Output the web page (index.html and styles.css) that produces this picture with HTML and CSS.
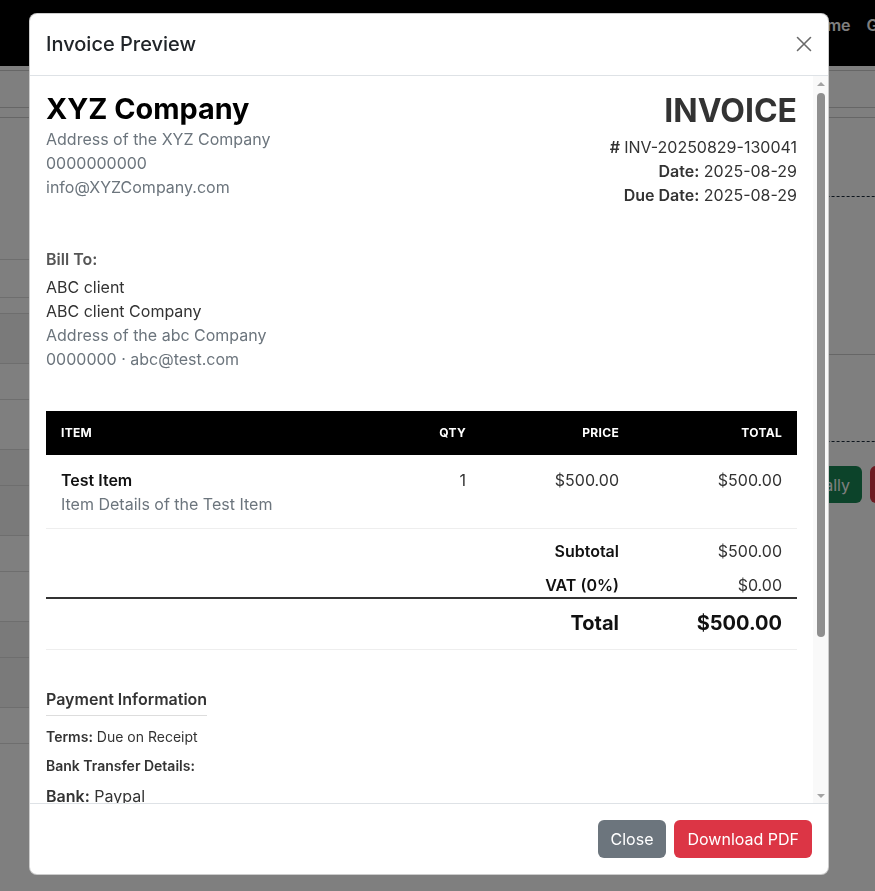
FILE: index.html
```html
<!DOCTYPE html>
<html lang="en">
<head>
<meta charset="utf-8">
<title>Invoice Preview</title>
<link rel="stylesheet" href="styles.css">
</head>
<body>
<div class="page">
  <nav class="topnav">
    <a class="nav-link">Invoices</a>
    <a class="nav-link">Home</a>
    <a class="nav-link">Guide</a>
  </nav>
  <div class="toolbar"></div>
  <div class="tabs"></div>
  <div class="content">
    <div class="bg-left">
      <div class="bg-spacer"></div>
      <div class="bg-h1"></div>
      <div class="bg-h2"></div>
      <div class="bg-main"></div><div class="bg-sub"></div>
      <div class="bg-main alt"></div><div class="bg-sub alt"></div>
      <div class="bg-main"></div><div class="bg-sub"></div>
      <div class="bg-main alt"></div><div class="bg-sub alt"></div>
      <div class="bg-main"></div><div class="bg-sub"></div>
      <div class="bg-last"></div>
    </div>
    <div class="bg-right">
      <div class="card-a"></div>
      <div class="card-b"></div>
      <div class="card-c"></div>
      <div class="card-actions">
        <span class="bg-btn green">Mark Paid Manually</span>
        <span class="bg-btn red">Delete</span>
      </div>
    </div>
  </div>
</div>
<div class="backdrop"></div>

<div class="modal">
  <header class="modal-header">
    <h5 class="modal-title">Invoice Preview</h5>
    <button class="btn-close" aria-label="Close">
      <svg width="16" height="16" viewBox="0 0 16 16"><path d="M1.5 1.5 L14.5 14.5 M14.5 1.5 L1.5 14.5" stroke="currentColor" stroke-width="1.6" fill="none" stroke-linecap="round"/></svg>
    </button>
  </header>
  <div class="modal-body">
    <div class="body-content">
      <div class="inv-head">
        <div class="from">
          <h1 class="company">XYZ Company</h1>
          <div class="muted">Address of the XYZ Company</div>
          <div class="muted">0000000000</div>
          <div class="muted">info@XYZCompany.com</div>
        </div>
        <div class="meta">
          <h2 class="inv-title">INVOICE</h2>
          <div><b># </b>INV-20250829-130041</div>
          <div><b>Date:</b> 2025-08-29</div>
          <div><b>Due Date:</b> 2025-08-29</div>
        </div>
      </div>

      <div class="bill">
        <div class="bill-label">Bill To:</div>
        <div>ABC client</div>
        <div>ABC client Company</div>
        <div class="muted">Address of the abc Company</div>
        <div class="muted">0000000 · abc@test.com</div>
      </div>

      <table class="items">
        <colgroup>
          <col>
          <col class="c-qty">
          <col class="c-price">
          <col class="c-total">
        </colgroup>
        <thead>
          <tr>
            <th class="left">Item</th>
            <th>Qty</th>
            <th>Price</th>
            <th>Total</th>
          </tr>
        </thead>
        <tbody>
          <tr class="item-row">
            <td class="left">
              <div class="item-name">Test Item</div>
              <div class="muted">Item Details of the Test Item</div>
            </td>
            <td>1</td>
            <td>$500.00</td>
            <td>$500.00</td>
          </tr>
          <tr class="sub-row">
            <td colspan="2"></td>
            <td class="lbl">Subtotal</td>
            <td>$500.00</td>
          </tr>
          <tr class="vat-row">
            <td colspan="2"></td>
            <td class="lbl">VAT (0%)</td>
            <td>$0.00</td>
          </tr>
          <tr class="total-row">
            <td colspan="2"></td>
            <td class="lbl">Total</td>
            <td>$500.00</td>
          </tr>
        </tbody>
      </table>

      <section class="payment">
        <h6 class="pay-title">Payment Information</h6>
        <p class="small"><b>Terms:</b> Due on Receipt</p>
        <p class="small"><b>Bank Transfer Details:</b></p>
        <p class="line"><b>Bank:</b> Paypal</p>
        <p class="line"><b>Account Name:</b> XYZ Company</p>
        <p class="line"><b>Account Number:</b> 0000000000</p>
      </section>
    </div>
    <div class="vscroll" aria-hidden="true">
      <div class="arrow"><span class="tri up"></span></div>
      <div class="track"><div class="thumb"></div></div>
      <div class="arrow"><span class="tri down"></span></div>
    </div>
  </div>
  <footer class="modal-footer">
    <button class="btn btn-secondary">Close</button>
    <button class="btn btn-danger">Download PDF</button>
  </footer>
</div>
</body>
</html>
```
FILE: styles.css
```css
* { box-sizing: border-box; }
html, body { margin: 0; padding: 0; overflow: hidden; height: 100%; }
body {
  font-family: Inter, "Noto Sans", "Liberation Sans", sans-serif;
  color: #212529;
  background: #fff;
}

/* ---------- background page ---------- */
.page { width: 960px; }
.topnav {
  height: 66px;
  background: #000;
  display: flex;
  justify-content: flex-end;
  align-items: center;
  gap: 16px;
  padding-right: 48px;
  padding-bottom: 16px;
}
.nav-link { color: #fff; font-weight: 600; font-size: 16px; }
.toolbar {
  margin-top: 4px;
  height: 38px;
  border-top: 1px solid #ccc;
  border-bottom: 1px solid #ccc;
}
.tabs { height: 10px; border-bottom: 1px solid #ccc; }
.content { display: grid; grid-template-columns: 420px 1fr; }
.bg-left div { border-bottom: 1px solid #dcdcdc; }
.bg-spacer { height: 142px; }
.bg-h1 { height: 38px; }
.bg-h2 { height: 16px; }
.bg-main { height: 50px; background: #f4f4f4; }
.bg-sub { height: 36px; }
.bg-main.alt { background: #fff; }
.bg-sub.alt { background: #f4f4f4; }
.bg-last { height: 36px; border-bottom: none !important; }
.bg-right { padding-right: 10px; }
.card-a { height: 79px; border-bottom: 1px dashed #1a2a3a; }
.card-b { height: 158px; border-bottom: 1px solid #ccc; }
.card-c { height: 87px; border-bottom: 1px dashed #1a2a3a; }
.card-actions {
  display: flex;
  justify-content: flex-end;
  gap: 8px;
  margin-top: 24px;
}
.bg-btn {
  height: 37px;
  padding: 0 12px;
  display: inline-flex;
  align-items: center;
  border-radius: 6px;
  color: #fff;
  font-size: 16px;
}
.bg-btn.green { background: #198754; }
.bg-btn.red { background: #dc3545; width: 80px; }

.backdrop {
  position: fixed;
  inset: 0;
  background: rgba(0, 0, 0, 0.5);
}

/* ---------- modal ---------- */
.modal {
  position: fixed;
  top: 13px;
  left: 29px;
  width: 800px;
  height: 862px;
  background: #fff;
  border: 1px solid rgba(0, 0, 0, 0.2);
  border-radius: 8px;
  display: flex;
  flex-direction: column;
  overflow: hidden;
}
.modal-header {
  display: flex;
  align-items: center;
  justify-content: space-between;
  padding: 15px 16px 16px;
  border-bottom: 1px solid #dee2e6;
  flex: none;
}
.modal-title {
  margin: 0;
  font-size: 20px;
  font-weight: 500;
  line-height: 30px;
  color: #212529;
}
.btn-close {
  border: 0;
  background: none;
  padding: 0;
  width: 16px;
  height: 16px;
  color: #6a6a6a;
  display: flex;
}
.modal-body {
  flex: 1;
  min-height: 0;
  display: flex;
  color: #333;
}
.body-content {
  flex: 1;
  min-width: 0;
  overflow: hidden;
  padding: 16px;
}

/* scrollbar */
.vscroll {
  width: 15px;
  flex: none;
  display: flex;
  flex-direction: column;
  background: #f9f9f9;
}
.arrow {
  height: 15px;
  flex: none;
  display: flex;
  align-items: center;
  justify-content: center;
}
.tri { width: 0; height: 0; border-left: 4px solid transparent; border-right: 4px solid transparent; }
.tri.up { border-bottom: 4px solid #a3a3a3; }
.tri.down { border-top: 4px solid #a3a3a3; }
.track { flex: 1; display: flex; justify-content: center; padding-top: 2px; }
.thumb { width: 8px; height: 544px; background: #8f8f8f; border-radius: 4px; }

.modal-footer {
  flex: none;
  border-top: 1px solid #dee2e6;
  padding: 12px;
  display: flex;
  justify-content: flex-end;
}
.btn {
  margin: 4px;
  height: 38px;
  padding: 6px 13px;
  border: 0;
  border-radius: 6px;
  font-family: inherit;
  font-size: 16px;
  line-height: 24px;
  color: #fff;
}
.btn-secondary { background: #6c757d; }
.btn-danger { background: #dc3545; }

/* ---------- invoice ---------- */
.muted { color: #6c757d; }
.inv-head {
  display: flex;
  justify-content: space-between;
  align-items: flex-start;
  margin-bottom: 40px;
  font-size: 16px;
  line-height: 24px;
}
.company {
  margin: 0;
  font-size: 28.8px;
  line-height: 1.2;
  font-weight: 700;
  color: #000;
}
.meta { text-align: right; color: #333; }
.meta b { font-weight: 600; }
.inv-title {
  margin: 0 0 5px;
  font-size: 32px;
  line-height: 1.2;
  font-weight: 700;
  color: #333;
}
.bill { font-size: 16px; line-height: 24px; color: #333; margin-bottom: 40px; }
.bill-label { font-size: 16px; font-weight: 600; color: #555; margin-bottom: 4px; }

.items {
  width: 100%;
  border-collapse: collapse;
  table-layout: fixed;
  font-size: 16px;
  line-height: 24px;
}
.c-qty { width: 75px; }
.c-price { width: 153px; }
.c-total { width: 163px; }
.items th {
  background: #000;
  color: #fff;
  font-size: 12px;
  font-weight: 700;
  line-height: 14px;
  text-transform: uppercase;
  letter-spacing: 0.3px;
  padding: 15px;
  text-align: right;
}
.items th.left, .items td.left { text-align: left; }
.items td { text-align: right; vertical-align: top; padding: 0 15px; }
.item-row td { padding: 13px 15px 12px; border-bottom: 1px solid #eee; }
.item-name { font-weight: 600; color: #111; }
.lbl { font-weight: 600; color: #111; }
.sub-row td { padding-top: 10px; padding-bottom: 5px; }
.vat-row td { padding-top: 5px; padding-bottom: 0; }
.total-row td {
  border-top: 2px solid #333;
  border-bottom: 1px solid #eee;
  font-size: 20px;
  line-height: 30px;
  font-weight: 700;
  color: #111;
  padding-top: 9px;
  padding-bottom: 11px;
}

.payment { margin-top: 37px; }
.pay-title {
  display: inline-block;
  margin: 0 0 10px;
  font-size: 16px;
  font-weight: 600;
  line-height: 24px;
  padding-bottom: 4px;
  border-bottom: 1px solid #ddd;
  color: #333;
}
.payment p { margin: 0; color: #333; }
.payment b { font-weight: 600; }
.small { font-size: 14px; line-height: 21px; margin-bottom: 8px !important; }
.line { font-size: 16px; line-height: 24px; margin-bottom: 8px !important; }
```
